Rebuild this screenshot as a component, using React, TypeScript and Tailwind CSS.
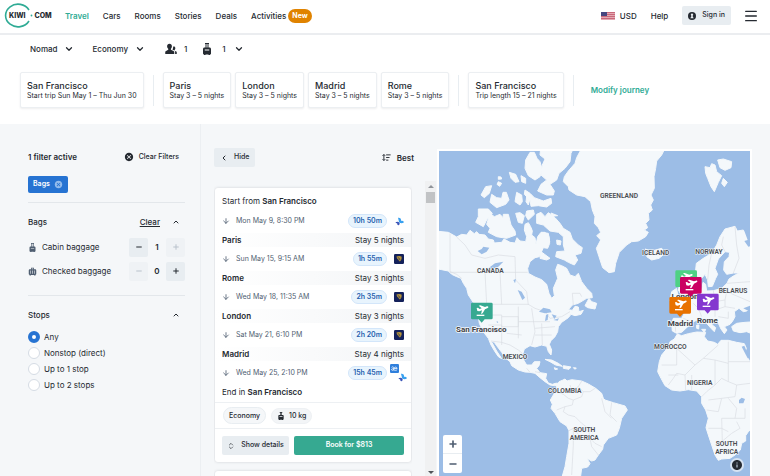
import React from 'react';
import { ArrowDown, ChevronDown, ChevronLeft, ChevronUp, ChevronsUpDown, Menu, Minus, Plus } from 'lucide-react';
import { MdCancel, MdInfo } from 'react-icons/md';

type IconProps = { className?: string };

const navLinks = ['Cars', 'Rooms', 'Stories', 'Deals'];

const stays = ['Paris', 'London', 'Madrid', 'Rome'];

const legs = [
    { date: 'Mon May 9, 8:30 PM', duration: '10h 50m', carrier: 'bird', city: 'Paris', nights: 'Stay 5 nights' },
    { date: 'Sun May 15, 9:15 AM', duration: '1h 55m', carrier: 'ryanair', city: 'Rome', nights: 'Stay 3 nights' },
    { date: 'Wed May 18, 11:35 AM', duration: '2h 35m', carrier: 'ryanair', city: 'London', nights: 'Stay 3 nights' },
    { date: 'Sat May 21, 6:10 PM', duration: '2h 20m', carrier: 'ryanair', city: 'Madrid', nights: 'Stay 4 nights' },
    { date: 'Wed May 25, 2:10 PM', duration: '15h 45m', carrier: 'both' },
];

const stopOptions = ['Any', 'Nonstop (direct)', 'Up to 1 stop', 'Up to 2 stops'];

function Logo() {
    return (
        <svg viewBox="0 0 50 26" className="h-[26px] w-[50px]" role="img" aria-label="Kiwi.com">
            <path d="M25 7A12.500 11.300 0 1 0 25 18" fill="none" stroke="#2fab95" strokeWidth="1.600" />
            <text x="5" y="15" fontSize="7" fontWeight="800" fill="#252a31">KIWI</text>
            <circle cx="27.500" cy="12.500" r="0.900" fill="#2fab95" />
            <text x="30.500" y="15" fontSize="7" fontWeight="800" fill="#252a31">COM</text>
        </svg>
    );
}

function PassengersIcon({ className }: IconProps) {
    return (
        <svg viewBox="0 0 24 24" fill="currentColor" className={className} aria-hidden="true">
            <path d="M9 1.500c3 0 4.800 2.300 4.800 5.200 0 2.200-.9 4-2 5v1.800l5.200 2.300c1.100.5 1.500 1.300 1.500 2.400V22H.5v-3.800c0-1.100.4-1.900 1.500-2.400l4.500-2.300v-1.800c-1.300-1-2.300-2.800-2.300-5C4.200 3.800 6 1.500 9 1.500z" />
            <path d="M17 6.500c2.200 0 3.700 1.600 3.700 3.800 0 1.600-.7 2.800-1.500 3.600v1.400l3.200 1.600c.8.400 1.100 1 1.100 1.800V22h-3.300v-4.500c0-1.400-1-2.300-2.200-2.800l-3-1.400c.6-1 1-2.400 1-4z" />
        </svg>
    );
}

function CabinBagIcon({ className }: IconProps) {
    return (
        <svg viewBox="0 0 24 24" fill="currentColor" className={className} aria-hidden="true">
            <path d="M8 0h8v2h-1v7h2c1.700 0 3 1.300 3 3v9c0 1.300-.8 2-2 2v1h-3v-1H9v1H6v-1c-1.200 0-2-.7-2-2v-9c0-1.700 1.300-3 3-3h2V2H8zm3 2v7h2V2zM7.500 13v1.800h9V13z" />
        </svg>
    );
}

function CheckedBagIcon({ className }: IconProps) {
    return (
        <svg viewBox="0 0 24 24" fill="currentColor" className={className} aria-hidden="true">
            <path d="M8 2h8v4h3c1.700 0 3 1.300 3 3v9c0 1.700-1 3-2.500 3v2H17v-2H7v2H4.500v-2C3 21 2 19.700 2 18V9c0-1.700 1.300-3 3-3h3zm2 2v2h4V4zM6.500 9v9H8V9zm4.700 0v9h1.600V9zM16 9v9h1.500V9z" />
        </svg>
    );
}

function SortIcon({ className }: IconProps) {
    return (
        <svg viewBox="0 0 24 24" fill="none" stroke="currentColor" strokeWidth="2.500" className={className} aria-hidden="true">
            <path d="M5 4v16M1.500 7.500 5 4l3.500 3.500M1.500 16.500 5 20l3.500-3.500M11 5h12M11 12h9M11 19h6" />
        </svg>
    );
}

function UserIcon({ className }: IconProps) {
    return (
        <svg viewBox="0 0 24 24" className={className} aria-hidden="true">
            <circle cx="12" cy="12" r="12" fill="#252a31" />
            <path d="M12 4.500a3.600 3.600 0 0 1 2 6.600v2l3 5.400H7l3-5.400v-2a3.600 3.600 0 0 1 2-6.600z" fill="#e8edf1" />
        </svg>
    );
}

function FlagIcon() {
    return (
        <svg viewBox="0 0 28 16" className="h-2 w-[14px]" aria-hidden="true">
            <rect width="28" height="16" fill="#e3a9b2" />
            <path d="M0 1h28M0 5h28M0 9h28M0 13h28" stroke="#c9687a" strokeWidth="2" />
            <rect width="12" height="8" fill="#46467f" />
        </svg>
    );
}

function BirdLogo() {
    return (
        <svg viewBox="0 0 24 24" className="size-[9px] shrink-0" aria-hidden="true">
            <path d="M8 2c4-1 8 1 8 5v3c4 0 7 1 8 4-3 2-6 3-10 2-2-1-4-3-4-6z" fill="#39a1f0" />
            <path d="M1 14c4-2 8-2 11 1 1 3 0 6-3 7-3-1-3-4-3-5-2 0-4-1-5-3z" fill="#3b55b8" />
        </svg>
    );
}

function RyanairLogo() {
    return (
        <svg viewBox="0 0 24 24" className="size-[10px] shrink-0" aria-hidden="true">
            <rect width="24" height="24" rx="3" fill="#14215a" />
            <path d="M6 6c4-2 9-2 12 0 1 5 0 9-4 12-2-1-3-2-3-4-3-1-4-4-5-8z" fill="#b8963a" />
            <path d="M9 9c3 0 5 2 5 6" fill="none" stroke="#14215a" strokeWidth="1.500" />
        </svg>
    );
}

function AirEuropaLogo() {
    return (
        <svg viewBox="0 0 24 24" className="size-[9px] shrink-0" aria-hidden="true">
            <rect width="24" height="24" rx="3" fill="#2f7fdc" />
            <path d="M4 9c2-2 6-2 6 1v7M10 13c-3-1-6 0-6 2s4 3 6 0c1 2 7 3 9 0M11 12h8c0-5-8-5-8 0z" fill="none" stroke="#fff" strokeWidth="2" />
        </svg>
    );
}

function Carrier({ name }: { name: string }) {
    if (name === 'both') {
        return (
            <span className="-mr-[3px] ml-[3px] flex w-[17px] flex-col">
                <AirEuropaLogo />
                <span className="self-end"><BirdLogo /></span>
            </span>
        );
    }
    return (
        <span className="flex w-[17px] justify-end">
            {name === 'bird' ? <BirdLogo /> : <RyanairLogo />}
        </span>
    );
}

function TripCard({ title, detail }: { title: string; detail: string }) {
    return (
        <button className="h-9 rounded-[2px] border border-[#eceff2] bg-white px-[6px] text-left shadow-[0_1px_2px_rgba(37,42,49,0.08)]">
            <span className="block text-[9px] leading-[10px] font-medium">{title}</span>
            <span className="block text-[7px] leading-[9px] whitespace-nowrap">{detail}</span>
        </button>
    );
}

function Header() {
    return (
        <header className="flex h-[35px] shrink-0 items-center justify-between border-b-2 border-[#ebedf0] bg-white pr-[11px] pb-[2px] pl-1 text-[8px] font-medium">
            <div className="flex items-center">
                <Logo />
                <nav className="ml-[11px] flex items-center gap-[14px]">
                    <a href="#travel" className="font-semibold text-[#2fab95]">Travel</a>
                    {navLinks.map(link => (
                        <a key={link} href={`#${link.toLowerCase()}`}>{link}</a>
                    ))}
                    <a href="#activities" className="flex items-center gap-[2px]">
                        Activities
                        <span className="rounded-full bg-[#e08300] px-1 text-[7px] leading-[14px] font-bold text-white">New</span>
                    </a>
                </nav>
            </div>
            <div className="flex items-center gap-[14px]">
                <button className="flex items-center gap-[5px]"><FlagIcon />USD</button>
                <a href="#help">Help</a>
                <button className="flex h-[19px] items-center gap-[6px] rounded-[2px] bg-[#e8edf1] px-[6px] text-[7px]">
                    <UserIcon className="size-2" />
                    Sign in
                </button>
                <button className="-ml-[2px]" aria-label="Menu"><Menu className="size-4" strokeWidth={2} /></button>
            </div>
        </header>
    );
}

function SearchBar() {
    return (
        <section className="h-[89px] shrink-0 bg-white">
            <div className="flex h-7 items-center pl-[30px] text-[8px] font-medium">
                <button className="flex items-center gap-[7px]">Nomad <ChevronDown className="size-[10px]" strokeWidth={3} /></button>
                <button className="ml-[18px] flex items-center gap-[7px]">Economy <ChevronDown className="size-[10px]" strokeWidth={3} /></button>
                <button className="ml-5 flex items-center gap-[7px]" aria-label="Passengers">
                    <PassengersIcon className="size-3" /> 1
                </button>
                <button className="ml-[14px] flex items-center" aria-label="Baggage">
                    <CabinBagIcon className="mr-[9px] size-3" /> 1 <ChevronDown className="ml-2 size-[10px]" strokeWidth={3} />
                </button>
            </div>
            <div className="mt-[9px] flex items-center gap-[9px] pl-5">
                <TripCard title="San Francisco" detail="Start trip Sun May 1 – Thu Jun 30" />
                <div className="h-[31px] w-px bg-[#e8edf1]" />
                <div className="flex gap-1">
                    {stays.map(city => <TripCard key={city} title={city} detail="Stay 3 – 5 nights" />)}
                </div>
                <div className="h-[31px] w-px bg-[#e8edf1]" />
                <TripCard title="San Francisco" detail="Trip length 15 – 21 nights" />
                <div className="h-[31px] w-px bg-[#e8edf1]" />
                <a href="#modify" className="ml-2 text-[8px] font-semibold text-[#2fab95]">Modify journey</a>
            </div>
        </section>
    );
}

function BagRow({ icon, label, count }: { icon: React.ReactNode; label: string; count: number }) {
    return (
        <div className="flex h-6 items-center">
            <span className="w-[14px] text-[#4f5e71]">{icon}</span>
            <span className="flex-1">{label}</span>
            <button
                aria-label={`Remove ${label}`}
                disabled={count === 0}
                className="flex size-[19px] items-center justify-center rounded-[2px] bg-[#e8edf1] disabled:bg-[#eff2f5] disabled:text-[#b9c2cc]"
            >
                <Minus className="size-2" strokeWidth={3} />
            </button>
            <span className="w-[18px] text-center font-semibold">{count}</span>
            <button
                aria-label={`Add ${label}`}
                disabled={count === 1}
                className="flex size-[19px] items-center justify-center rounded-[2px] bg-[#e8edf1] disabled:bg-[#eff2f5] disabled:text-[#b9c2cc]"
            >
                <Plus className="size-2" strokeWidth={3} />
            </button>
        </div>
    );
}

function Filters() {
    return (
        <aside className="w-[201px] shrink-0 border-r border-[#eceff2] pr-[15px] pl-7 text-[8px]">
            <div className="mt-6 flex h-[18px] items-center justify-between">
                <h2 className="font-semibold">1 filter active</h2>
                <button className="mr-[6px] flex items-center gap-[5px] text-[7px] font-medium">
                    <MdCancel className="size-[10px]" />
                    Clear Filters
                </button>
            </div>
            <button className="mt-[10px] flex h-[17px] items-center gap-1 rounded-[2px] bg-[#2673d2] px-[5px] text-[7px] font-semibold text-white">
                Bags
                <MdCancel className="size-[9px] text-[#94bcec]" />
            </button>

            <section className="mt-[9px] border-t border-[#e3e7eb] pt-3">
                <div className="mb-[6px] flex h-[14px] items-center font-medium">
                    <h3 className="flex-1">Bags</h3>
                    <button className="mr-3 underline">Clear</button>
                    <button className="mr-[5px]" aria-label="Collapse bags"><ChevronUp className="size-2" strokeWidth={3} /></button>
                </div>
                <BagRow icon={<CabinBagIcon className="size-[9px]" />} label="Cabin baggage" count={1} />
                <BagRow icon={<CheckedBagIcon className="size-[9px]" />} label="Checked baggage" count={0} />
            </section>

            <section className="mt-3 border-t border-[#e3e7eb] pt-3">
                <div className="mb-[7px] flex h-[14px] items-center font-medium">
                    <h3 className="flex-1">Stops</h3>
                    <button className="mr-[5px]" aria-label="Collapse stops"><ChevronUp className="size-2" strokeWidth={3} /></button>
                </div>
                {stopOptions.map((option, i) => (
                    <label key={option} className="flex h-4 items-center gap-1">
                        <input
                            type="radio"
                            name="stops"
                            defaultChecked={i === 0}
                            className="size-3 appearance-none rounded-full border border-[#d5dce4] bg-white checked:border-4 checked:border-[#2673d2]"
                        />
                        {option}
                    </label>
                ))}
            </section>
        </aside>
    );
}

function ResultCard() {
    return (
        <article className="rounded-[3px] bg-white pt-[6px] text-[8px] shadow-[0_0_3px_rgba(37,42,49,0.18)]">
            <p className="px-[7px] leading-[15px]">Start from <strong className="font-semibold">San Francisco</strong></p>
            {legs.map(leg => (
                <div key={leg.date}>
                    <div className="flex h-6 items-center px-[7px] text-[7px] text-[#4f5e71]">
                        <ArrowDown className="mr-[6px] size-2" strokeWidth={2.5} />
                        <span className="flex-1">{leg.date}</span>
                        <span className="rounded-full border border-[#d3e6fa] bg-[#e8f4fd] px-1 leading-[12px] font-semibold text-[#1f5fae]">{leg.duration}</span>
                        <Carrier name={leg.carrier} />
                    </div>
                    {leg.city && (
                        <div className="flex h-[14px] items-center justify-between bg-gradient-to-r from-white to-[#f3f5f7] px-[7px]">
                            <span className="font-semibold">{leg.city}</span>
                            <span>{leg.nights}</span>
                        </div>
                    )}
                </div>
            ))}
            <p className="px-[7px] leading-[14px]">End in <strong className="font-semibold">San Francisco</strong></p>
            <div className="mt-[3px] flex h-[27px] items-center gap-[5px] border-y border-[#edf0f3] px-2 text-[7px] font-medium">
                <span className="rounded-full border border-[#e8edf1] bg-[#f5f7f9] px-[5px] leading-[15px]">Economy</span>
                <span className="flex items-center gap-1 rounded-full border border-[#eef1f4] bg-[#f3f5f7] px-[5px] leading-[14px]">
                    <CabinBagIcon className="size-2" /> 10 kg
                </span>
            </div>
            <div className="flex gap-[5px] px-[7px] py-[7px] text-[7px]">
                <button className="flex h-[19px] w-[67px] items-center justify-center gap-[6px] rounded-[2px] bg-[#e8edf1] font-medium">
                    <ChevronsUpDown className="size-2" />
                    Show details
                </button>
                <button className="h-[19px] flex-1 rounded-[2px] bg-[#36a991] font-semibold text-white">Book for $813</button>
            </div>
        </article>
    );
}

function Results() {
    return (
        <section className="flex w-[235px] shrink-0 flex-col pl-[13px]">
            <div className="mt-6 flex h-[19px] shrink-0 items-center justify-between pr-[22px] text-[8px] font-medium">
                <button className="flex h-[19px] items-center gap-[6px] rounded-[2px] bg-[#e8edf1] px-[6px] text-[7px]">
                    <ChevronLeft className="size-2" strokeWidth={3} />
                    Hide
                </button>
                <button className="flex items-center gap-[6px] font-semibold"><SortIcon className="size-[9px]" />Best</button>
            </div>
            <div className="mt-[14px] flex min-h-0 flex-1 justify-between">
                <div className="flex w-[198px] flex-col gap-[9px] overflow-hidden px-px pt-[7px]">
                    <ResultCard />
                    <div className="h-10 shrink-0 rounded-[3px] bg-white shadow-[0_0_3px_rgba(37,42,49,0.18)]" />
                </div>
                <div className="flex w-[11px] flex-col items-center bg-[#f0f1f2]" aria-hidden="true">
                    <span className="mt-1 border-x-3 border-b-3 border-x-transparent border-b-[#909499]" />
                    <span className="mt-1 h-[11px] w-[9px] bg-[#c1c3c5]" />
                    <span className="mt-auto mb-[2px] border-x-3 border-t-3 border-x-transparent border-t-[#505459]" />
                </div>
            </div>
        </section>
    );
}

// outlines of land masses, in the map's own units
const land = [
    // North and Central America
    'M0 258L40 262 65 276 80 268 95 270 105 256 118 266 125 260 132 268 150 270 160 282 175 285 178 294 200 292 207 282 225 292 240 294 246 278 255 288 272 290 275 275 268 255 270 238 280 233 287 245 292 258 290 270 300 278 303 298 308 275 318 262 330 262 342 275 344 295 338 310 325 308 313 335 300 338 285 350 278 370 280 385 300 396 320 404 335 418 342 445 350 460 358 452 355 430 368 400 362 375 368 358 380 362 395 370 405 390 420 395 430 385 440 410 455 430 470 445 472 458 455 460 430 475 412 480 400 494 412 496 420 484 430 486 432 500 445 496 438 508 420 512 408 508 400 518 380 532 370 545 368 560 360 575 348 587 343 598 350 615 348 630 340 620 335 604 320 600 300 606 285 602 268 612 264 625 266 645 275 660 290 660 298 650 315 650 312 662 305 670 315 683 335 686 332 700 340 714 352 718 365 714 368 722 358 722 345 720 330 710 315 698 300 685 285 682 270 681 250 675 230 662 225 650 210 638 200 622 185 602 178 592 168 588 175 600 185 618 195 633 200 641 190 635 178 617 168 600 160 580 150 567 140 550 133 535 130 515 131 495 118 478 108 462 100 450 95 430 85 415 78 400 65 395 50 388 40 378 20 374 0 370z',
    // South America
    'M365 718L372 710 382 706 390 702 396 708 410 704 440 708 460 717 482 730 500 745 505 760 510 765 535 773 570 783 577 795 560 820 553 850 545 870 520 880 505 900 503 913 490 930 480 945 470 948 456 940 465 956 458 966 440 970 436 1000 380 1000 390 965 395 935 402 895 402 857 395 843 375 830 360 805 348 790 352 778 346 765 355 750 365 735z',
    // Greenland
    'M440 10L425 38 420 55 400 78 388 95 385 110 400 125 402 135 425 150 450 155 467 170 472 195 480 215 478 235 490 248 497 262 485 272 497 285 484 310 492 335 503 368 522 383 538 380 542 355 553 322 575 300 590 290 610 288 632 275 640 262 628 255 638 248 632 235 642 225 640 205 652 195 647 180 655 165 648 150 658 130 657 95 662 70 665 48 680 30 690 10z',
    // Arctic islands
    'M285 22L298 22 306 40 315 50 322 75 315 95 300 105 280 92 270 70 272 45z',
    'M318 0L420 0 408 25 405 50 390 70 372 85 365 105 345 118 358 138 355 150 335 150 308 138 318 118 335 105 318 90 322 60 330 42 315 30z',
    'M270 135L285 145 298 158 325 168 348 160 350 175 335 186 310 182 288 184 285 165 268 148z',
    'M170 122L152 125 138 150 148 158 163 145z',
    'M190 95L198 96 200 102 190 103zM190 110L200 115 194 124 186 118z',
    'M223 82L242 88 252 110 240 112 228 100zM258 92L272 100 272 115 260 110z',
    'M170 148L185 158 200 160 204 142 214 142 222 165 212 178 185 188 165 172z',
    'M245 142L260 150 262 170 255 180 240 170zM275 155L284 165 280 180 273 170z',
    'M130 192L160 192 172 205 155 225 145 245 122 232 130 215z',
    'M165 205L178 215 195 208 204 218 205 208 220 208 228 240 240 258 242 270 215 280 185 275 160 262 165 250 155 238z',
    'M242 205L255 203 268 212 262 235 250 232zM275 198L295 195 298 208 280 225 272 212z',
    'M272 240L288 250 288 268 278 270zM320 262L340 265 344 290 335 308 322 295zM318 320L345 340 335 345 315 340z',
    'M305 208L318 202 330 215 340 203 360 218 375 235 385 250 405 262 412 282 430 300 442 308 438 325 420 330 428 345 418 360 400 352 388 345 362 335 365 320 390 318 385 300 385 275 370 262 345 258 325 240 305 235z',
    'M348 204L368 212 350 214zM365 285L378 288 376 300 366 298z',
    // Newfoundland and Caribbean
    'M462 460L470 470 485 475 480 492 458 488 450 482z',
    'M330 643L350 645 370 655 382 664 362 660 345 650zM385 662L408 666 402 673 385 670zM358 668L368 672 360 674zM415 668L424 669 420 673z',
    // Svalbard and Iceland
    'M810 65L825 68 830 56 840 60 845 80 860 92 850 112 838 140 828 125 818 100 812 85z',
    'M848 45L865 42 890 50 888 68 870 76 855 68zM865 100L877 112 868 125 860 115z',
    'M630 312L650 318 680 310 690 325 672 340 650 345 635 335 642 325z',
    // Great Britain and Ireland
    'M730 400L748 398 745 415 760 430 765 448 770 465 745 475 730 470 742 455 730 435 735 415z',
    'M710 440L725 430 728 450 722 465 705 468z',
    // Europe
    'M960 275L935 265 925 255 907 258 900 244 885 248 870 252 855 275 845 300 830 325 805 340 784 355 782 375 787 395 798 402 810 388 818 405 820 425 832 424 842 400 848 388 840 370 850 342 870 320 884 322 882 335 868 350 866 375 875 388 895 384 912 384 895 393 882 402 876 415 860 430 835 437 815 438 812 418 804 412 800 435 785 447 770 462 752 480 742 492 748 505 740 520 715 520 710 535 712 558 725 565 740 562 755 548 772 532 792 522 808 520 815 535 828 550 838 560 842 548 832 540 820 522 838 522 850 535 858 552 868 566 876 555 868 545 885 538 893 528 900 515 898 500 912 490 925 500 935 498 960 482z',
    'M890 545L905 535 930 532 960 530 960 570 935 560 915 563 895 558z',
    'M800 553L812 553 808 562zM785 540L792 540 791 552 785 550z',
    // Africa
    'M727 567L740 572 760 566 785 561 812 562 808 575 818 588 838 592 848 598 858 586 880 586 905 592 928 596 934 610 930 622 960 680 960 842 940 860 932 872 932 888 920 895 916 915 900 930 885 940 860 942 850 946 840 930 830 900 820 870 813 848 820 820 812 795 800 775 800 755 785 738 760 734 735 738 710 735 690 722 678 700 668 680 673 650 680 630 690 618 700 608 705 590 718 582z',
];

// lakes and inner seas, painted over the land
const water = [
    'M128 318L140 312 145 305 163 308 155 320 140 328zM160 370L180 355 205 350 190 365 172 372zM235 405L243 402 240 415zM248 435L260 440 270 458 262 465 255 450z',
    'M312 500L325 488 345 493 350 502 330 505zM333 510L340 507 338 525 330 528zM350 508L365 512 358 522zM355 525L372 520 368 527zM185 527L190 532 186 534z',
    'M925 250L960 278 960 300 940 305 928 288 938 285z',
    'M912 765L920 758 930 762 925 775 912 775zM925 490L945 482 945 500z',
    'M920 605L928 602 944 640 938 640z',
];

const borders = [
    'M45 265L45 380 65 388 80 400M65 276L90 300 110 330 150 340 190 330 240 335M45 382L150 382 278 382M150 382L155 478M195 382L200 478M240 335L242 405 275 440 280 480M415 480L412 445 435 445 440 455',
    'M118 478L280 478 300 490 330 500 345 520 380 515 405 500M160 480L160 510 200 510 200 560M130 510L160 512M160 540L200 540 200 600M200 515L250 515 250 545 200 545M250 485L250 580M250 530L300 530M290 490L300 560 290 600M300 530L345 530M300 550L360 545M300 570L350 570M320 535L322 600M215 565L260 570M168 588L200 592 225 600 250 615 262 625M275 670L285 682M315 683L300 680',
    'M365 740L385 748 400 760 415 765 412 780 390 785 365 795M440 708L430 725 445 740 465 740 480 730M430 725L410 735 405 720M445 740L440 755 415 765M390 785L385 800 400 810 420 815 440 835 460 850 465 880 480 895 500 905M402 857L415 850 440 880 465 880M415 850L415 900 410 990M465 880L470 905 490 930M500 760L510 800 530 820M530 773L525 810 545 830',
    'M705 605L725 610 780 660 805 640 850 600M725 610L725 660 680 660M780 660L750 690 725 685M805 640L840 645 880 655 880 590M880 655L880 710 860 700 840 720 840 645M880 650L945 650M860 760L900 755 905 720 880 710M840 720L815 740 800 755M820 765L860 760 850 800 815 795M880 760L905 790 900 820 860 820M820 850L860 850 880 860M860 820L862 890 840 900M860 890L890 865 915 850 905 830M900 820L930 820 930 790M750 690L752 735M770 690L770 735M700 720L715 700 725 685M905 720L945 715M730 690L700 690',
    'M830 325L822 360 818 405M865 275L860 300 870 320M900 245L905 300 912 340 895 384M835 437L840 470 870 465 875 440M840 470L815 485 840 495 870 485 870 465M815 485L790 490 775 475M790 490L800 515M840 495L840 515M870 485L900 490M876 415L945 410M875 440L945 470M850 515L880 520M880 520L880 500M745 520L775 532M720 530L722 560',
];

const countries = [
    { name: 'GREENLAND', x: 552, y: 159 },
    { name: 'CANADA', x: 166, y: 384 },
    { name: 'ICELAND', x: 662, y: 331 },
    { name: 'NORWAY', x: 822, y: 327 },
    { name: 'BELARUS', x: 894, y: 443 },
    { name: 'MEXICO', x: 240, y: 642 },
    { name: 'MOROCCO', x: 706, y: 613 },
    { name: 'NIGERIA', x: 794, y: 719 },
    { name: 'COLOMBIA', x: 389, y: 744 },
    { name: 'SOUTH', x: 448, y: 861 },
    { name: 'AMERICA', x: 448, y: 885 },
    { name: 'SOUTH', x: 875, y: 904 },
    { name: 'AFRICA', x: 875, y: 927 },
];

const cities = [
    { name: 'San Francisco', x: 139, y: 561 },
    { name: 'London', x: 750, y: 463 },
    { name: 'Madrid', x: 736, y: 544 },
    { name: 'Rome', x: 817, y: 534 },
];

const pins = [
    { color: '#4ed184', x: 721, y: 376 },
    { color: '#cb0062', x: 735, y: 396 },
    { color: '#e87200', x: 703, y: 456 },
    { color: '#8437cf', x: 786, y: 446 },
    { color: '#36a991', x: 108, y: 473 },
];

function RouteMap() {
    return (
        <section className="relative min-w-0 flex-1 overflow-hidden border-2 border-b-0 border-white bg-[#9cbde6]" aria-label="Route map">
            <svg viewBox="12 18 933 975" preserveAspectRatio="xMidYMid slice" className="absolute inset-0 size-full font-['Roboto','Liberation_Sans',sans-serif]">
                {land.map(d => <path key={d} d={d} fill="#f4f8fb" stroke="#f4f8fb" strokeWidth="3" strokeLinejoin="round" />)}
                {borders.map(d => <path key={d} d={d} fill="none" stroke="#d9dce2" strokeWidth="2" strokeLinejoin="round" />)}
                {water.map(d => <path key={d} d={d} fill="#9cbde6" />)}
                {countries.map(c => (
                    <text key={`${c.name}${c.x}`} x={c.x} y={c.y} textAnchor="middle" fontSize="20" fontWeight="600" fill="#4a4d52" stroke="#f4f8fb" strokeWidth="3" paintOrder="stroke">{c.name}</text>
                ))}
                {cities.map(c => (
                    <text key={c.name} x={c.x} y={c.y} textAnchor="middle" fontSize="24" fontWeight="700" fill="#3f4247" stroke="#f4f8fb" strokeWidth="5" paintOrder="stroke">{c.name}</text>
                ))}
                {pins.map(p => (
                    <g key={p.color} transform={`translate(${p.x} ${p.y})`}>
                        <path d="M4 0h57a4 4 0 0 1 4 4v42a4 4 0 0 1-4 4H41l-9 10-9-10H4a4 4 0 0 1-4-4V4a4 4 0 0 1 4-4z" fill={p.color} />
                        <path d="M17 16l4-1 5 4 6-2-9-8 5-1 14 5 6-2c4-1 6 3 2 5l-8 4-7 12-5 2 3-11-8 3-6-1z" fill="#fff" />
                        <path d="M17 38h23" stroke="#fff" strokeWidth="4" />
                    </g>
                ))}
            </svg>
            <div className="absolute bottom-0 left-1 mb-[3px] flex w-[19px] flex-col rounded-[2px] bg-white text-[#4f5e71]">
                <button className="flex h-[19px] items-center justify-center border-b border-[#e8edf1]" aria-label="Zoom in"><Plus className="size-[10px]" strokeWidth={4} /></button>
                <button className="flex h-[19px] items-center justify-center" aria-label="Zoom out"><Minus className="size-[10px]" strokeWidth={4} /></button>
            </div>
            <button className="absolute right-[6px] bottom-1 rounded-full bg-[#d6e3f2] p-px" aria-label="Map information"><MdInfo className="size-3 text-[#252a31]" /></button>
        </section>
    );
}

export default function App() {
    return (
        <div className="flex h-screen flex-col overflow-hidden bg-[#f5f7f9] font-['Inter','Liberation_Sans',sans-serif] text-[#252a31]">
            <Header />
            <SearchBar />
            <main className="flex min-h-0 flex-1">
                <Filters />
                <Results />
                <div className="flex min-w-0 flex-1 pt-[25px] pr-[18px] pl-px">
                    <RouteMap />
                </div>
            </main>
        </div>
    );
}
